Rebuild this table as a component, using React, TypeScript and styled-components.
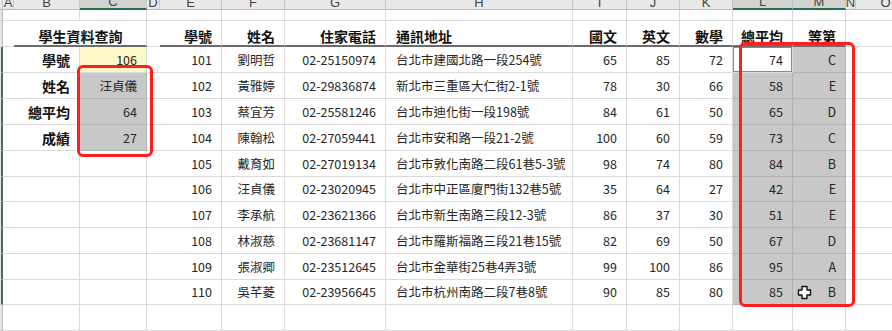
import styled, { createGlobalStyle } from 'styled-components'

const GlobalStyle = createGlobalStyle`
  html, body {
    margin: 0;
    padding: 0;
    background: #ffffff;
    overflow: hidden;
  }
  body {
    font-family: "Noto Sans CJK TC", "Noto Sans", sans-serif;
    color: #222222;
  }
`

type Fill = 'none' | 'yellow' | 'sel' | 'active'
type Align = 'left' | 'right' | 'center'

// row header sliver, then A..O; P takes the rest
const colWidths = [3, 11, 66, 67, 13, 62, 63, 101, 187, 54, 53, 53, 60, 53, 10, 60]
const rowHeights = [10, 11, 26, 26, 26, 26, 26, 26, 25, 26, 26, 26, 25, 26]
const letters = ['A', 'B', 'C', 'D', 'E', 'F', 'G', 'H', 'I', 'J', 'K', 'L', 'M', 'N', 'O', 'P']
const selectedCols = ['C', 'L', 'M']

const Sheet = styled.div`
  position: relative;
  display: grid;
  grid-template-columns: ${colWidths.map((w) => `${w}px`).join(' ')} 1fr;
  grid-template-rows: ${rowHeights.map((h) => `${h}px`).join(' ')};
  width: 892px;
  height: 331px;
  overflow: hidden;
`

const ColHead = styled.div<{ $selected?: boolean }>`
  box-sizing: border-box;
  display: flex;
  align-items: flex-end;
  justify-content: center;
  overflow: hidden;
  background: ${(p) => (p.$selected ? '#d3d3d3' : '#e9e9e9')};
  border-right: 1px solid #c6c6c6;
  border-bottom: ${(p) => (p.$selected ? '2px solid #217346' : '1px solid #bdbdbd')};
  font-family: "Liberation Sans", sans-serif;
  font-size: 13px;
  line-height: 13px;
  color: #444444;
`

const RowHead = styled.div<{ $selected?: boolean }>`
  box-sizing: border-box;
  background: #e6e6e6;
  border-bottom: 1px solid #d0d0d0;
  border-right: ${(p) => (p.$selected ? '2px solid #3f6f57' : '1px solid #bdbdbd')};
`

const fills: Record<Fill, string> = {
  none: '#ffffff',
  yellow: '#fdf8c8',
  sel: '#c8c8c8',
  active: '#ffffff',
}

const Cell = styled.div<{
  $align?: Align
  $bold?: boolean
  $fill?: Fill
  $thick?: boolean
  $head?: boolean
  $span?: number
}>`
  box-sizing: border-box;
  display: flex;
  align-items: ${(p) => (p.$head ? 'flex-end' : 'center')};
  justify-content: ${(p) =>
    p.$align === 'left' ? 'flex-start' : p.$align === 'center' ? 'center' : 'flex-end'};
  grid-column: span ${(p) => p.$span ?? 1};
  padding: ${(p) => (p.$head ? '0 9px 1px 10px' : '0 9px 0 10px')};
  background: ${(p) => fills[p.$fill ?? 'none']};
  border-right: 1px solid ${(p) => (p.$fill === 'sel' ? '#b2b2b2' : '#dadada')};
  border-bottom: ${(p) =>
    p.$thick ? '2px solid #6b6b6b' : `1px solid ${p.$fill === 'sel' ? '#b2b2b2' : '#dadada'}`};
  box-shadow: ${(p) => (p.$fill === 'active' ? 'inset 0 0 0 1px #8a8a8a' : 'none')};
  font-size: ${(p) => (p.$bold ? '14px' : '12.5px')};
  font-weight: ${(p) => (p.$bold ? 700 : 400)};
  line-height: 16px;
  color: ${(p) => (p.$bold ? '#111111' : '#262626')};
  white-space: nowrap;
`

const RedBox = styled.div<{ $x: number; $y: number; $w: number; $h: number }>`
  position: absolute;
  left: ${(p) => p.$x}px;
  top: ${(p) => p.$y}px;
  width: ${(p) => p.$w}px;
  height: ${(p) => p.$h}px;
  box-sizing: border-box;
  border: 3.5px solid #ff1e1e;
  border-radius: 6px;
  pointer-events: none;
`

const Cursor = styled.svg`
  position: absolute;
  left: 797px;
  top: 285px;
  width: 15px;
  height: 15px;
`

const heads = ['學號', '姓名', '住家電話', '通訊地址', '國文', '英文', '數學', '總平均', '等第']

const students = [
  ['101', '劉明哲', '02-25150974', '台北市建國北路一段254號', '65', '85', '72', '74', 'C'],
  ['102', '黃雅婷', '02-29836874', '新北市三重區大仁街2-1號', '78', '30', '66', '58', 'E'],
  ['103', '蔡宜芳', '02-25581246', '台北市迪化街一段198號', '84', '61', '50', '65', 'D'],
  ['104', '陳翰松', '02-27059441', '台北市安和路一段21-2號', '100', '60', '59', '73', 'C'],
  ['105', '戴育如', '02-27019134', '台北市敦化南路二段61巷5-3號', '98', '74', '80', '84', 'B'],
  ['106', '汪貞儀', '02-23020945', '台北市中正區廈門街132巷5號', '35', '64', '27', '42', 'E'],
  ['107', '李承航', '02-23621366', '台北市新生南路三段12-3號', '86', '37', '30', '51', 'E'],
  ['108', '林淑慈', '02-23681147', '台北市羅斯福路三段21巷15號', '82', '69', '50', '67', 'D'],
  ['109', '張淑卿', '02-23512645', '台北市金華街25巷4弄3號', '99', '100', '86', '95', 'A'],
  ['110', '吳芊菱', '02-23956645', '台北市杭州南路二段7巷8號', '90', '85', '80', '85', 'B'],
]

const lookup: Record<number, [string, string, Fill]> = {
  3: ['學號', '106', 'yellow'],
  4: ['姓名', '汪貞儀', 'sel'],
  5: ['總平均', '64', 'sel'],
  6: ['成績', '27', 'sel'],
}

const Blank = () => <Cell />

const HeaderRow = () => (
  <>
    <Blank />
    <Cell $head $bold $align="center" $span={2} $thick>
      學生資料查詢
    </Cell>
    <Blank />
    {heads.map((h, i) => (
      <Cell key={h} $head $bold $thick $align={i === 3 ? 'left' : 'right'}>
        {h}
      </Cell>
    ))}
    <Blank />
    <Blank />
    <Blank />
  </>
)

const DataRow = ({ row }: { row: number }) => {
  const look = lookup[row]
  const s = students[row - 3]
  return (
    <>
      <Blank />
      {look ? (
        <>
          <Cell $bold>{look[0]}</Cell>
          <Cell $fill={look[2]}>{look[1]}</Cell>
        </>
      ) : (
        <>
          <Blank />
          <Blank />
        </>
      )}
      <Blank />
      {s
        ? s.map((v, i) => {
            let fill: Fill = 'none'
            if (i === 7) fill = row === 3 ? 'active' : 'sel'
            if (i === 8) fill = 'sel'
            return (
              <Cell key={i} $fill={fill} $align={i === 3 ? 'left' : 'right'}>
                {v}
              </Cell>
            )
          })
        : heads.map((h) => <Blank key={h} />)}
      <Blank />
      <Blank />
      <Blank />
    </>
  )
}

const RowGroup = ({ row }: { row: number }) => (
  <>
    <RowHead $selected={row >= 3 && row <= 12} />
    {row === 1 ? letters.map((l) => <Blank key={l} />) : row === 2 ? <HeaderRow /> : <DataRow row={row} />}
  </>
)

export default function App() {
  const rows = Array.from({ length: 13 }, (_, i) => i + 1)
  return (
    <>
      <GlobalStyle />
      <Sheet>
        <ColHead />
        {letters.map((l) => (
          <ColHead key={l} $selected={selectedCols.includes(l)}>
            {l}
          </ColHead>
        ))}

        {rows.map((r) => (
          <RowGroup key={r} row={r} />
        ))}

        <RedBox $x={77} $y={65} $w={76} $h={92} />
        <RedBox $x={739} $y={42} $w={116} $h={265} />

        <Cursor viewBox="0 0 15 15">
          <path
            d="M5 1.5h5v3.5h3.5v5H10v3.5H5V10H1.5V5H5z"
            fill="#ffffff"
            stroke="#111111"
            strokeWidth="1.4"
            strokeLinejoin="round"
          />
        </Cursor>
      </Sheet>
    </>
  )
}
